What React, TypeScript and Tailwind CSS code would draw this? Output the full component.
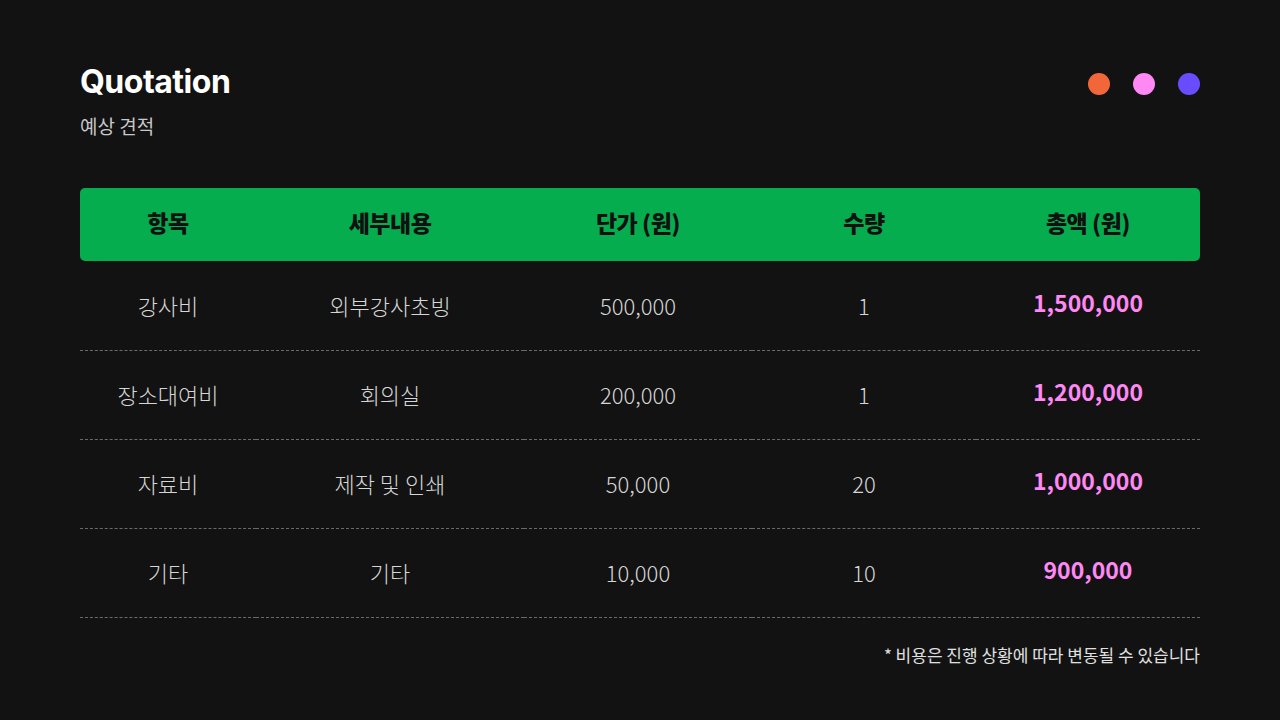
const rows = [
  { item: "강사비", detail: "외부강사초빙", price: "500,000", qty: "1", total: "1,500,000" },
  { item: "장소대여비", detail: "회의실", price: "200,000", qty: "1", total: "1,200,000" },
  { item: "자료비", detail: "제작 및 인쇄", price: "50,000", qty: "20", total: "1,000,000" },
  { item: "기타", detail: "기타", price: "10,000", qty: "10", total: "900,000" },
];

const headers = ["항목", "세부내용", "단가 (원)", "수량", "총액 (원)"];

export default function App() {
  return (
    <div
      className="min-h-[720px] w-full bg-[#121212] px-20 pt-[62px]"
      style={{ fontFamily: '"Noto Sans CJK KR", "Noto Sans", sans-serif' }}
    >
      <div className="flex items-start justify-between">
        <div>
          <h1 className="font-['Inter','Noto_Sans_CJK_KR',sans-serif] text-[32px] font-bold leading-[40px] tracking-[-0.5px] text-white">
            Quotation
          </h1>
          <p className="mt-[10px] text-[19px] font-normal leading-7 text-[#c8c8c8]">예상 견적</p>
        </div>
        <div className="mt-[11px] flex gap-[23px]">
          <span className="h-[22px] w-[22px] rounded-full bg-[#f2673a]" />
          <span className="h-[22px] w-[22px] rounded-full bg-[#ff88f5]" />
          <span className="h-[22px] w-[22px] rounded-full bg-[#6a4cff]" />
        </div>
      </div>

      <table className="mt-[48px] w-full table-fixed border-collapse">
        <colgroup>
          <col className="w-[176px]" />
          <col className="w-[268px]" />
          <col className="w-[228px]" />
          <col className="w-[224px]" />
          <col className="w-[224px]" />
        </colgroup>
        <thead>
          <tr>
            {headers.map((h, i) => (
              <th
                key={h}
                className={
                  "h-[73px] bg-[#05ad4f] pb-[4px] text-center text-[23px] font-black tracking-[-0.5px] text-[#111] " +
                  (i === 0 ? "rounded-l-[5px] " : "") +
                  (i === headers.length - 1 ? "rounded-r-[5px]" : "")
                }
              >
                {h}
              </th>
            ))}
          </tr>
        </thead>
        <tbody>
          {rows.map((r) => (
            <tr key={r.item} className="border-b border-dashed border-[#6a6a6a]">
              <td className="h-[89px] text-center text-[22px] font-light text-[#d6d6d6]">{r.item}</td>
              <td className="text-center text-[22px] font-light text-[#d6d6d6]">{r.detail}</td>
              <td className="text-center text-[22px] font-light text-[#d6d6d6]">{r.price}</td>
              <td className="text-center text-[22px] font-light text-[#d6d6d6]">{r.qty}</td>
              <td className="pb-[6px] text-center text-[23px] font-bold text-[#ff88f2]">{r.total}</td>
            </tr>
          ))}
        </tbody>
      </table>

      <p className="mt-[24px] text-right text-[17px] font-normal text-[#e0e0e0]">
        * 비용은 진행 상황에 따라 변동될 수 있습니다
      </p>
    </div>
  );
}
